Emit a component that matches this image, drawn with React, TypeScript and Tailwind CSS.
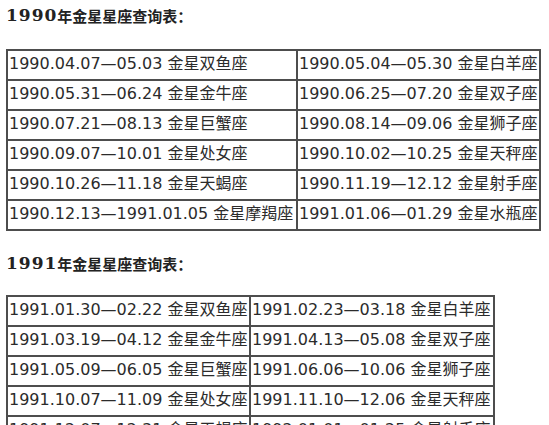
import React from "react";

const t1: [string, string][] = [
  ["1990.04.07—05.03 金星双鱼座", "1990.05.04—05.30 金星白羊座"],
  ["1990.05.31—06.24 金星金牛座", "1990.06.25—07.20 金星双子座"],
  ["1990.07.21—08.13 金星巨蟹座", "1990.08.14—09.06 金星狮子座"],
  ["1990.09.07—10.01 金星处女座", "1990.10.02—10.25 金星天秤座"],
  ["1990.10.26—11.18 金星天蝎座", "1990.11.19—12.12 金星射手座"],
  ["1990.12.13—1991.01.05 金星摩羯座", "1991.01.06—01.29 金星水瓶座"],
];

const t2: [string, string][] = [
  ["1991.01.30—02.22 金星双鱼座", "1991.02.23—03.18 金星白羊座"],
  ["1991.03.19—04.12 金星金牛座", "1991.04.13—05.08 金星双子座"],
  ["1991.05.09—06.05 金星巨蟹座", "1991.06.06—10.06 金星狮子座"],
  ["1991.10.07—11.09 金星处女座", "1991.11.10—12.06 金星天秤座"],
  ["1991.12.07—12.31 金星天蝎座", "1992.01.01—01.25 金星射手座"],
];

function Title({ year }: { year: string }) {
  return (
    <div className="h-6 flex items-center font-bold text-[#222]">
      <span className="text-[17px] tracking-[1px] font-['DejaVu_Serif','Noto_Sans_CJK_SC',serif]">{year}</span>
      <span className="text-[15px] font-['Noto_Sans_CJK_SC',sans-serif]">年金星星座查询表：</span>
    </div>
  );
}

function Table({ rows, cols }: { rows: [string, string][]; cols: string }) {
  return (
    <div className={`grid ${cols} border-t-2 border-l-2 border-[#4d4d4d] w-max`}>
      {rows.map((r, i) => (
        <React.Fragment key={i}>
          {r.map((c, j) => (
            <div
              key={j}
              className="h-[30px] border-r-2 border-b-2 border-[#4d4d4d] pl-px pb-[2px] leading-[26px] whitespace-nowrap overflow-hidden text-[16px] text-[#2b2b2b]"
            >
              {c}
            </div>
          ))}
        </React.Fragment>
      ))}
    </div>
  );
}

export default function App() {
  return (
    <div className="w-[549px] h-[425px] overflow-hidden bg-white pl-[6px] font-['DejaVu_Sans','Noto_Sans_CJK_SC',sans-serif]">
      <div className="pt-1 mb-[21px]">
        <Title year="1990" />
      </div>
      <Table rows={t1} cols="grid-cols-[290px_243px]" />
      <div className="mt-[21px] mb-[19px]">
        <Title year="1991" />
      </div>
      <Table rows={t2} cols="grid-cols-[243px_244px]" />
    </div>
  );
}
